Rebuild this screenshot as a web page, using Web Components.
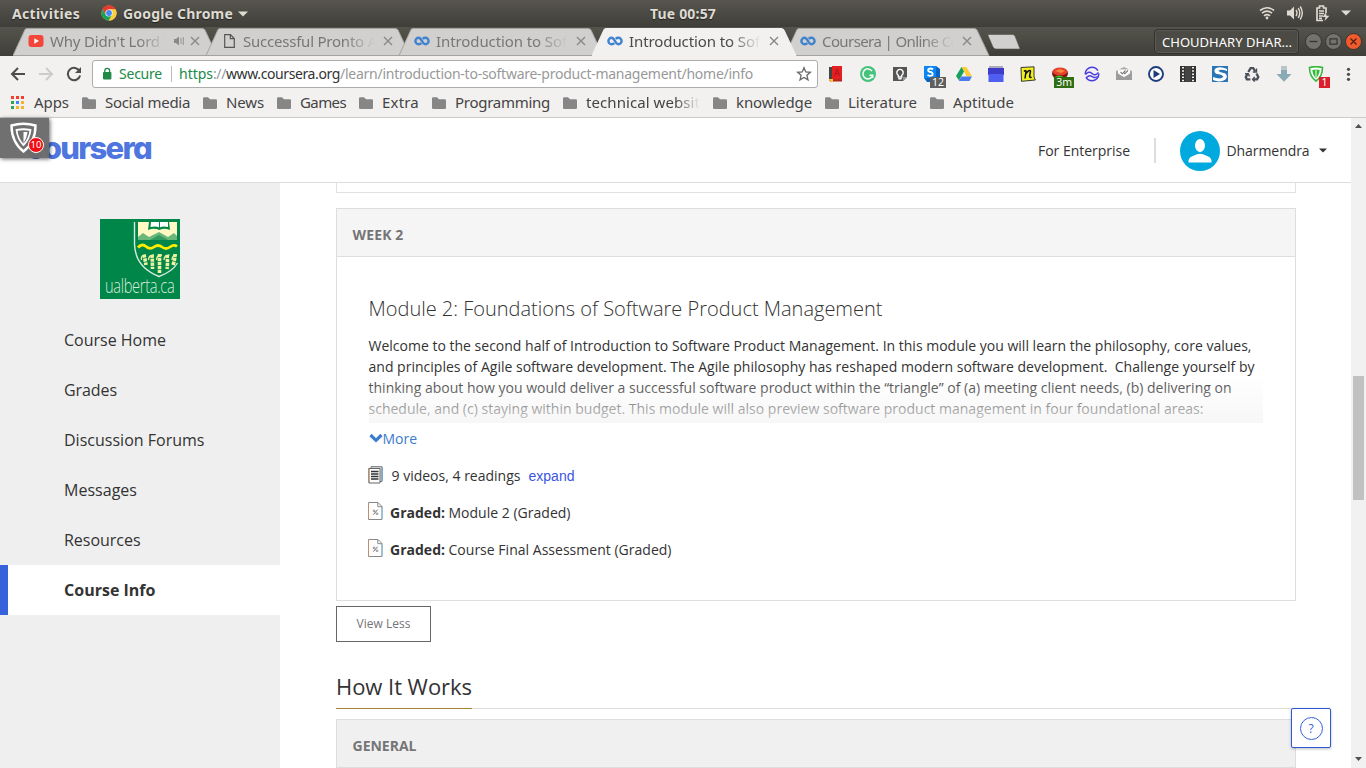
<!DOCTYPE html>
<html lang="en">
<head>
<meta charset="utf-8">
<title>Introduction to Software Product Management | Coursera</title>
<style>
html,body{margin:0;height:100%;overflow:hidden}
body{font-family:"Open Sans","Noto Sans",sans-serif;background:#fff}
</style>
</head>
<body>
<desktop-screen></desktop-screen>
<script>
const define = (name, html) => {
  const t = document.createElement('template');
  t.innerHTML = html;
  customElements.define(name, class extends HTMLElement {
    constructor() {
      super();
      this.attachShadow({mode: 'open'}).append(t.content.cloneNode(true));
    }
  });
};

define('desktop-screen', `
<style>:host{display:flex;flex-direction:column;width:1366px;height:768px;overflow:hidden}</style>
<top-panel></top-panel><tab-strip></tab-strip><browser-toolbar></browser-toolbar><bookmark-bar></bookmark-bar><page-view></page-view>`);

define('top-panel', `
<style>
:host{display:grid;grid-template-columns:1fr auto 1fr;align-items:center;box-sizing:border-box;height:27px;padding-bottom:1px;flex:none;background:linear-gradient(#57554e,#3f3e39);color:#dfdbd2;font:bold 14px "Noto Sans",sans-serif;text-shadow:0 1px 1px #222}
.l{display:flex;align-items:center;padding-left:12px}
.l svg{margin:0 6px 0 21px}
.l .dn{margin:1px 0 0 5px}
.r{display:flex;justify-content:flex-end;align-items:center;padding-right:15px;gap:11px}
</style>
<div class="l"><fit-text w="68">Activities</fit-text>
<svg width="16" height="16" viewBox="0 0 16 16"><circle cx="8" cy="8" r="7.6" fill="#fc4"/><path d="M1.4 4.2A7.6 7.6 0 0 1 14.6 4.2H8L5 9.8z" fill="#e33b2e"/><path d="M1.4 4.2A7.6 7.6 0 0 0 7.8 15.6L11.2 10 8 8 4.9 9.8z" fill="#1da15a"/><path d="M14.7 4.4H8L11.2 10 7.9 15.6A7.6 7.6 0 0 0 14.7 4.4" fill="#fdcd40"/><circle cx="8" cy="8" r="3.6" fill="#fff"/><circle cx="8" cy="8" r="2.9" fill="#4587f3"/></svg>
<fit-text w="110">Google Chrome</fit-text><svg class="dn" width="10" height="6"><path d="M0 .5H10L5 5.5z" fill="#dfdbd2"/></svg></div>
<fit-text w="66">Tue 00:57</fit-text>
<div class="r">
<svg width="16" height="16" viewBox="0 0 16 16" fill="none" stroke="#dfdbd2" stroke-width="1.6"><path d="M1 5.5Q8 0 15 5.5M3 8.2Q8 4 13 8.2M5 10.8Q8 8.4 11 10.8"/><circle cx="8" cy="13" r="1.4" fill="#dfdbd2" stroke="none"/></svg>
<svg width="18" height="16" viewBox="0 0 18 16"><path d="M1 5.5H4L8 1.5V14.5L4 10.5H1z" fill="#dfdbd2"/><path d="M10 5Q12 8 10 11M12.2 3.2Q15.4 8 12.2 12.8M14.2 1.5Q18.4 8 14.2 14.5" fill="none" stroke="#dfdbd2" stroke-width="1.4"/></svg>
<svg width="15" height="17" viewBox="0 0 15 17"><path d="M11 8V3H8.5V1H4.5V3H2V15.5H8M4 6H9M4 8.5H9M4 11H8M4 13.3H7" fill="none" stroke="#dfdbd2" stroke-width="1.7"/><path d="M11 7.5 7.5 12H10.5L9.5 16 14.5 10.8H11.5z" fill="#dfdbd2"/></svg>
<svg width="10" height="6"><path d="M0 .5H10L5 5.5z" fill="#dfdbd2"/></svg>
</div>`);

define('tab-strip', `
<style>
:host{display:flex;height:29px;flex:none;background:linear-gradient(#55544c,#3f3e39);padding-left:13px;position:relative;color:#777;font:15px "Noto Sans",sans-serif}
browser-tab+browser-tab{margin-left:-13px}
browser-tab.on{z-index:2;color:#4a4a4a}
.new{margin:7px 0 0 -4px}
.prof{margin-left:auto;align-self:center;box-sizing:border-box;width:145px;height:25px;border:1px solid #33322e;border-radius:4px;background:#4b4a44;box-shadow:inset 0 0 0 1px #5a5952;color:#fff;font:13px "Noto Sans",sans-serif;line-height:24px;padding-left:7px}
.win{display:flex;gap:1px;align-items:center;margin:0 3px 0 5px}
</style>
<browser-tab><svg slot="icon" width="16" height="16"><rect x=".5" y="2" width="15" height="12" rx="3" fill="#f4453a"/><path d="M6.3 5.3V10.7L11 8z" fill="#fff"/></svg><fit-text w="131">Why Didn't Lord Vo</fit-text><svg slot="snd" width="12" height="12"><path d="M1 4H3L6 1.5V10.5L3 8H1z" fill="#888"/><path d="M8 3V9M10.3 2V10" stroke="#999" stroke-width="1.1"/></svg></browser-tab>
<browser-tab><svg slot="icon" width="16" height="16"><path d="M3.7 1.7H9.5L13.3 5.5V14.3H3.7zM9.3 1.7V5.7H13.3" fill="none" stroke="#555" stroke-width="1.2"/></svg><fit-text w="134">Successful Pronto A</fit-text></browser-tab>
<browser-tab><loop-icon slot="icon"></loop-icon><fit-text w="131">Introduction to Sof</fit-text></browser-tab>
<browser-tab class="on" active><loop-icon slot="icon"></loop-icon><fit-text w="131">Introduction to Sof</fit-text></browser-tab>
<browser-tab><loop-icon slot="icon"></loop-icon><fit-text w="137">Coursera | Online Co</fit-text></browser-tab>
<svg class="new" width="34" height="17"><path d="M1 1.5Q1 .5 2 .5H25.5Q27 .5 28 2L33 15H9Q7 15 6 13z" fill="#d2d0cf" stroke="#55544c" stroke-width=".6"/></svg>
<div class="prof"><fit-text w="130">CHOUDHARY DHAR...</fit-text></div>
<div class="win">
<svg width="19" height="19"><circle cx="9.5" cy="9.5" r="8" fill="#74736b" stroke="#35342f"/><path d="M5.5 9.5H13.5" stroke="#35342f" stroke-width="1.3"/></svg>
<svg width="19" height="19"><circle cx="9.5" cy="9.5" r="8" fill="#74736b" stroke="#35342f"/><path d="M6 6.8H13V12.2H6z" fill="none" stroke="#35342f" stroke-width="1.2"/></svg>
<svg width="19" height="19"><circle cx="9.5" cy="9.5" r="8" fill="#f15a2c" stroke="#35342f"/><path d="M6.5 6.5 12.5 12.5M12.5 6.5 6.5 12.5" stroke="#5c2010" stroke-width="1.4"/></svg>
</div>`);

define('loop-icon', `<style>:host{display:block;width:16px;height:16px}</style>
<svg width="16" height="16" style="display:block"><path d="M7.400 10.300Q6.200 11.200 4.600 11.200A3.200 3.200 0 0 1 4.600 4.800C8 4.800 8 11.200 11.400 11.200A3.200 3.200 0 0 0 11.400 4.800Q9.800 4.800 8.700 5.700" fill="none" stroke="#3f82cf" stroke-width="2.4"/></svg>`);

define('browser-tab', `
<style>
:host{display:grid;width:206px;height:29px;flex:none;position:relative}
:host>*{grid-area:1/1}
.bg{display:block}
.shape{fill:#d2d0cf;stroke:#a5a39f}
:host([active]) .shape{fill:#f2f1f0;stroke:#f2f1f0}
.c{display:flex;align-items:center;height:28px;padding-left:15px}
.t{margin-left:6px;width:133px;overflow:hidden;white-space:nowrap;-webkit-mask:linear-gradient(90deg,#000 76%,transparent 99%);display:flex}
.x{margin-left:7px}
:host(:first-of-type) .t{width:117px}
::slotted(svg){display:block;flex:none}
::slotted([slot=snd]){width:12px;margin-left:6px;margin-right:-2px}
</style>
<svg class="bg" width="206" height="29"><path class="shape" d="M0 28.5 12 2.5Q13 1.5 14 1.5H189Q191 1.5 192 3L204 28.5z"/></svg>
<div class="c"><slot name="icon"></slot><div class="t"><slot></slot></div><slot name="snd"></slot><svg class="x" width="10" height="10"><path d="M1 1 9 9M9 1 1 9" stroke="#888" stroke-width="1.4"/></svg></div>`);

define('browser-toolbar', `
<style>
:host{display:flex;height:35px;flex:none;background:#f2f1f0;align-items:center;padding-left:10px;font:14px "Noto Sans",sans-serif}
.nav{display:flex;gap:12px;width:82px}
.omni{box-sizing:border-box;width:726px;height:28px;border:1px solid #adadad;border-radius:3px;background:#fff;display:flex;align-items:center;padding-left:9px}
.lock{margin-right:7px}
.sec{color:#218a47}
.div{width:1px;height:16px;background:#bbb;margin:0 7px 0 9px}
.g{color:#999}
.k{color:#333}
.star{margin-left:43px}
.ext{display:flex;gap:16px;margin-left:10px}
ext-icon{flex:none}
</style>
<div class="nav">
<svg width="16" height="16"><path d="M15 8H2.5M8 2 2 8 8 14" fill="none" stroke="#4d4d4d" stroke-width="2"/></svg>
<svg width="16" height="16"><path d="M1 8H13.5M8 2 14 8 8 14" fill="none" stroke="#ccc" stroke-width="2"/></svg>
<svg width="16" height="16"><path d="M13.6 5.2A6.2 6.2 0 1 0 14.1 9.5" fill="none" stroke="#4d4d4d" stroke-width="2"/><path d="M15 1V7H9z" fill="#4d4d4d"/></svg>
</div>
<div class="omni"><svg class="lock" width="10" height="13"><rect x="1" y="5" width="8.4" height="7.4" rx=".8" fill="#218a47"/><path d="M2.8 5.5V3.7A2.4 2.4 0 0 1 7.6 3.7V5.5" fill="none" stroke="#218a47" stroke-width="1.3"/></svg>
<fit-text class="sec" w="43">Secure</fit-text><i class="div"></i><fit-text class="sec" w="34">https</fit-text><fit-text class="g" w="13">://</fit-text><fit-text class="k" w="114">www.coursera.org</fit-text><fit-text class="g" w="413">/learn/introduction-to-software-product-management/home/info</fit-text>
<svg class="star" width="16" height="16"><path d="M8 1.7 9.8 5.9 14.4 6.3 10.9 9.3 12 13.8 8 11.4 4 13.8 5.1 9.3 1.6 6.3 6.2 5.9z" fill="none" stroke="#666" stroke-width="1.3"/></svg></div>
<div class="ext">
<ext-icon><svg width="16" height="16"><path d="M1 1H4V13H1z" fill="#444"/><path d="M4 0H14V14H4z" fill="#e31f22"/><path d="M6.500 10 9 3 11.500 10M7.300 7.500H10.700" fill="none" stroke="#b5151a" stroke-width="1"/><path d="M1 13.500H14V15.500H2z" fill="#b3261f"/><path d="M1 13H5V16H3z" fill="#ffc42c"/></svg></ext-icon>
<ext-icon><svg width="16" height="16"><circle cx="8" cy="8" r="8" fill="#45c37c"/><path d="M12 5A5 5 0 1 0 12.7 9.3H9.5M12.7 9V12" fill="none" stroke="#fff" stroke-width="1.5"/></svg></ext-icon>
<ext-icon><svg width="16" height="16"><path d="M1 1H15V11L11 15H1z" fill="#555"/><path d="M11 15V11H15z" fill="#999"/><path d="M6.3 11V9.3A3.2 3.2 0 1 1 9.7 9.3V11zM6.3 12.7H9.7" fill="none" stroke="#fff" stroke-width="1.4"/></svg></ext-icon>
<ext-icon><svg width="16" height="16"><path d="M0 0H12L16 3V16H3L0 12z" fill="#0563c9"/><path d="M0 0H12V12H0z" fill="#0a86f5"/><path d="M9 3.4Q7 2 5 2.8Q3 4.2 5.5 5.8Q9.5 6.5 8.5 9Q6.5 10.7 3.5 9" fill="none" stroke="#fff" stroke-width="1.9"/></svg><span slot="badge">12</span></ext-icon>
<ext-icon><svg width="16" height="16"><path d="M5.5 1H10.5L16 10.4H10.8z" fill="#fc3"/><path d="M5.5 1 8 5.6 3 14.5 0 10z" fill="#15a05e"/><path d="M5.4 10.4H16L13.4 15H2.8z" fill="#4a7af0"/></svg></ext-icon>
<ext-icon><svg width="16" height="16"><path d="M1 0H15V4H1z" fill="#aab"/><path d="M0 2H16V9H0z" fill="#3c3cc9"/><path d="M.5 8H15.5V16H.5z" fill="#4e5ef0"/></svg></ext-icon>
<ext-icon><svg width="16" height="16"><path d="M1 1.5 14 .8V11L15.300 14 1.500 15.300z" fill="#f2ef22" stroke="#222" stroke-width=".9"/><path d="M4 5.500Q6 3.600 6 5.500L5 12.500M6 7.500Q9.500 3 10.500 5L9.600 10Q9.500 12.200 11.500 11" fill="none" stroke="#111" stroke-width="1.5"/></svg></ext-icon>
<ext-icon style="--b:#2f6e12;--r:-6px"><svg width="16" height="16"><ellipse cx="8" cy="7.5" rx="8" ry="5.5" fill="#7d160b"/><ellipse cx="8" cy="5.5" rx="7.5" ry="4" fill="#e6412c"/><path d="M3 5 8 3 13 5 9 7z" fill="#f5863d"/><path d="M1 12Q7 7 13 12z" fill="#37c332"/></svg><span slot="badge">3m</span></ext-icon>
<ext-icon><svg width="16" height="16"><circle cx="8" cy="8" r="6.8" fill="none" stroke="#4b3ce0" stroke-width="1.5" stroke-dasharray="18 3"/><path d="M1.500 8.500Q5 4.500 8 7.500T14.500 6.500M2.500 11.500Q5.500 8.500 8 10.500T13.500 10.500" fill="none" stroke="#4b3ce0" stroke-width="1.4"/></svg></ext-icon>
<ext-icon><svg width="16" height="16"><path d="M0 5 8 1 16 5V14H0z" fill="#aaa"/><path d="M2 3.5H14V8.5L8 11 2 8.5z" fill="#fff"/><path d="M0 6 8 11.5 16 6V14H0z" fill="#9c9c9c"/><path d="M4.5 6 6.3 7.8 9.5 4.5M8 7 8.8 7.8 12 4.5" fill="none" stroke="#777" stroke-width="1.1"/></svg></ext-icon>
<ext-icon><svg width="16" height="16"><circle cx="8" cy="8" r="7" fill="#fff" stroke="#1b3d7b" stroke-width="1.9"/><path d="M5.5 4V12L12 8z" fill="#1b3d7b"/></svg></ext-icon>
<ext-icon><svg width="16" height="16"><path d="M0 0H16V16H0z" fill="#333"/><path d="M3 1V16M13 1V16" stroke="#f2f1f0" stroke-width="2" stroke-dasharray="1.5 1.7"/><path d="M5 0H11V16H5z" fill="#444"/></svg></ext-icon>
<ext-icon><svg width="16" height="16"><path d="M0 0H16V16H0z" fill="#2a75b5"/><path d="M15 3Q8-.3 3.5 2.5Q1 5 4 7.7Q10 8.5 11.5 10.5Q9 14 1 11V14Q8 17 13.5 13.5Q16.5 10 13 7.2Q8 6.5 6.3 4.8Q9 2.5 15 5z" fill="#fff"/></svg></ext-icon>
<ext-icon><svg width="16" height="16" fill="none" stroke="#4a4f5a" stroke-width="2.3"><path d="M4.3 6 6.6 2.2H9.2L11.3 5.3M12.5 7.5 14.3 11 13 13.4H9.2M6.4 13.4H2.9L1.8 11 3.8 7.7"/><path d="M12.5 2.5V6H8.8M10.7 11 8.6 13.4 10.7 15.6M1 7.8H4.3L5.5 10.4" stroke-width="1.4"/></svg></ext-icon>
<ext-icon><svg width="16" height="16"><path d="M5 0H11V8H15.5L8 15.7.5 8H5z" fill="#8aabb5"/><path d="M5 0H11V4H5z" fill="#b9c5c9"/></svg></ext-icon>
<ext-icon style="--b:#d9202b;--r:-6px"><svg width="16" height="16"><path d="M1.5 1.5Q8-.3 14.5 1.5Q14.5 10.5 8 15Q1.5 10.5 1.5 1.5z" fill="#fff" stroke="#35b93b" stroke-width="1.6"/><path d="M4.3 4Q8 3 11.7 4Q11.3 9 8 12Q4.7 9 4.3 4z" fill="#35b93b"/><path d="M8 4V11" stroke="#fff"/></svg><span slot="badge">1</span></ext-icon>
<svg width="16" height="16"><g fill="#4d4d4d"><circle cx="8.500" cy="3.3" r="1.6"/><circle cx="8.500" cy="8.3" r="1.6"/><circle cx="8.500" cy="13.3" r="1.6"/></g></svg>
</div>`);

define('ext-icon', `
<style>:host{display:block;width:16px;height:16px;position:relative}
::slotted(svg){display:block}
.b{position:absolute;right:var(--r,-6px);top:11px;background:var(--b,#5f5f5f);color:#fff;font:10.5px/11px "Noto Sans",sans-serif}
::slotted(span){display:block;padding:0 2px;min-width:7px;text-align:center}</style>
<slot></slot><div class="b"><slot name="badge"></slot></div>`);

define('bookmark-bar', `
<style>:host{display:flex;box-sizing:border-box;height:27px;flex:none;background:#f2f1f0;border-bottom:1px solid #ccc;padding:0 0 3px 11px;align-items:center;gap:13px;color:#444;font:15px "Noto Sans",sans-serif}
.apps{display:flex;align-items:center;gap:10px}
.fade{-webkit-mask:linear-gradient(90deg,#000 78%,transparent);display:block}
.apps fit-text{margin-top:-1px}</style>
<div class="apps"><svg width="13" height="13"><g fill="#f2402c"><path d="M0 0H3V3H0zM5 0H8V3H5zM10 0H13V3H10z"/></g><path d="M0 5H3V8H0zM0 10H3V13H0z" fill="#31a352"/><path d="M5 5H8V8H5z" fill="#4285f4"/><path d="M10 5H13V8H10zM5 10H8V13H5zM10 10H13V13H10z" fill="#f8b32d"/></svg><fit-text w="35">Apps</fit-text></div>
<book-mark><fit-text w="85">Social media</fit-text></book-mark>
<book-mark><fit-text w="38">News</fit-text></book-mark>
<book-mark><fit-text w="46">Games</fit-text></book-mark>
<book-mark><fit-text w="37">Extra</fit-text></book-mark>
<book-mark><fit-text w="95">Programming</fit-text></book-mark>
<book-mark><fit-text class="fade" w="114">technical websit</fit-text></book-mark>
<book-mark><fit-text w="76">knowledge</fit-text></book-mark>
<book-mark><fit-text w="69">Literature</fit-text></book-mark>
<book-mark><fit-text w="61">Aptitude</fit-text></book-mark>`);

define('book-mark', `<style>:host{display:flex;align-items:center;gap:9px}::slotted(*){margin-top:-1px}</style>
<svg width="14" height="12"><path d="M0 1.5Q0 .3 1.2.3H5L7 2.3H12.8Q14 2.3 14 3.5V10.8Q14 12 12.8 12H1.2Q0 12 0 10.8z" fill="#868686"/></svg><slot></slot>`);

define('page-view', `
<style>:host{display:grid;grid-template-columns:1351px 15px;height:650px;position:relative;font:14px "Open Sans",sans-serif;color:#333}
.p{display:grid;grid-template-rows:65px 585px;overflow:hidden}
.b{display:grid;grid-template-columns:280px 1fr;overflow:hidden}
.help{position:absolute;left:1291px;top:590px;width:38px;height:38px;border:1px solid #2a5bd0;border-radius:2px;background:#fff;display:grid;place-items:center;box-shadow:0 1px 3px #0004}
.help span{width:21px;height:21px;border:1px solid #3762dc;border-radius:50%;color:#3762dc;font-size:12px;line-height:21px;text-align:center}
.zm{position:absolute;left:0;top:0;width:49px;height:40px;background:#6b6b6bf7;box-shadow:1px 1px 4px #0009}
.zm svg{display:block}
.zm b{position:absolute;left:28px;top:19px;width:14px;height:14px;border:1.5px solid #fff;border-radius:50%;background:#f10e12;color:#fff;font:9.5px/14px "Noto Sans",sans-serif;text-align:center}</style>
<div class="p"><site-header></site-header><div class="b"><course-nav></course-nav><course-main></course-main></div></div>
<scroll-bar></scroll-bar>
<div class="help"><span>?</span></div>
<div class="zm"><svg width="49" height="40"><path d="M11.5 7.5Q23.500 4 35.500 7.500Q35.500 24 23.500 33.500Q11.500 24 11.500 7.500z" fill="none" stroke="#fff" stroke-width="2.4"/><path d="M16.500 12Q23.500 10.500 30.500 12Q29.500 21 23.500 27Q17.500 21 16.500 12z" fill="none" stroke="#fff" stroke-width="1.8"/><path d="M23.500 14H27.500Q27 20 23.500 25z" fill="#fff"/></svg><b>10</b></div>`);

define('scroll-bar', `<style>:host{display:flex;flex-direction:column;background:#f1f1f1;align-items:center}
i{width:11px;height:124px;background:#c1c1c1;margin:241px 0 auto}
svg{display:block;margin:5px 0 6px}</style>
<svg width="7" height="6"><path d="M0 5 3.500 1 7 5z" fill="#505050"/></svg><i></i><svg width="7" height="6"><path d="M0 1 3.500 5 7 1z" fill="#505050"/></svg>`);

define('site-header', `<style>:host{display:flex;align-items:center;box-sizing:border-box;border-bottom:1px solid #ddd;background:#fff;padding:0 24px 0 26px}
.logo{color:#4f75df;font:800 31px/40px Inter,sans-serif;font-feature-settings:"cv11","ss01";margin-top:-5px}
.e{margin-left:auto}
i{width:2px;height:25px;background:#ddd;margin:0 24px}
.av{margin-top:1px}
.n{margin:0 9.500px 0 6.500px}</style>
<fit-text class="logo" w="125">coursera</fit-text><fit-text class="e" w="92">For Enterprise</fit-text><i></i>
<svg class="av" width="40" height="40"><circle cx="20" cy="20" r="20" fill="#00a9de"/><ellipse cx="20" cy="14.500" rx="5" ry="6.500" fill="#fff"/><path d="M8.500 31.500V29.500Q9 26 14 24.500Q17 22.800 20 22.800T26 24.500Q31 26 31.500 29.500V31.500z" fill="#fff"/></svg>
<fit-text class="n" w="83">Dharmendra</fit-text><svg width="8" height="5"><path d="M0 .5H8L4 4.500z" fill="#333"/></svg>`);

define('course-nav', `<style>:host{display:flex;flex-direction:column;background:#efefef;font-size:16px;color:#333}
.logo{margin:36px 0 16px 100px;display:block;overflow:visible}
div{height:50px;padding-left:64px;display:flex;align-items:center}
.on{background:#fff;font-weight:700;border-left:8px solid #3762dc;padding-left:56px;color:#333}</style>
<svg class="logo" width="80" height="80"><path d="M0 0H80V80H0z" fill="#008648"/><path d="M34.500 3V25Q35 48 59 57.500Q72 53 77.500 44" fill="none" stroke="#d8eadb" stroke-width="1.400"/><path d="M38 3H77V21H38z" fill="#fffac3"/><path d="M49 3H69L70 11Q64 8.500 59.500 11Q54 8.500 48 11z" fill="#008648"/><path d="M51 3H68L68 8Q63 7 59.500 8.500Q56 7 50.500 8z" fill="#fff"/><path d="M59.500 3V10" stroke="#008648"/><path d="M38 18 43 14 49 18 59 13 68 18 74 14 77 17V21H38z" fill="#69b77a"/><path d="M50 21 59 16 68 21z" fill="#2f9b5e"/><path d="M38 21H77V25H38z" fill="#008648"/><path d="M38 28.500Q42 24 46 27.500T54 28T62 28T70 28T77 27.500" fill="none" stroke="#ffed00" stroke-width="2.800"/><g fill="none" stroke="#eff0a0" stroke-width="3.600" stroke-dasharray="3.200 .800"><path d="M44 36Q45 40 46 46M52 36Q52.500 42 52.500 50M59.500 35V54M67 36Q68 43 67 50M75 35Q75 40 73 46"/></g><g fill="none" stroke="#eff0a0" stroke-width="1.300"><path d="M41.500 41Q40.500 36 46 36M48.500 41Q48.500 36 54 36M56.500 41Q56.500 36 62 36M64 41Q64 36 69.500 36M72 41Q72 36 77 36"/></g><text transform="translate(5 73.500) scale(.75 1)" textLength="93" font-family="Open Sans" font-weight="300" font-size="19.500" fill="#d8eadb">ualberta.ca</text></svg>
<div><fit-text w="102">Course Home</fit-text></div><div><fit-text w="53">Grades</fit-text></div><div><fit-text w="140.500">Discussion Forums</fit-text></div><div><fit-text w="73">Messages</fit-text></div><div><fit-text w="76.500">Resources</fit-text></div><div class="on"><fit-text w="91.500">Course Info</fit-text></div>`);

define('course-main', `<style>:host{display:flex;flex-direction:column;padding:0 55px 0 56px;align-items:flex-start}
.prev{box-sizing:border-box;width:960px;height:10px;border:1px solid #e1e1e1;border-top:0;margin-bottom:15px;flex:none}
.pad{padding:37px 32px 0 31.500px}
h3{font:300 20px/30px "Open Sans",sans-serif;margin:0 0 11px}
.desc{position:relative;height:88px;width:894.500px}
.desc fit-text{display:block;line-height:21px}
.fade{position:absolute;inset:40px 0 0 .500px;background:linear-gradient(#f5f5f500,#f5f5f5d0)}
.more{color:#3a7ccd;display:flex;align-items:center;height:30px;margin-bottom:4px}
.row{display:flex;align-items:center;height:37px}
.row svg{margin:-1px 8.500px 0 -.500px}
.row b{font-weight:700;margin-right:3.500px}
.exp{font-family:"Liberation Sans",sans-serif;color:#3b55df;margin-left:8px}
.btn{box-sizing:border-box;width:95px;height:36px;flex:none;border:1px solid #666;margin:5px 0 27px;padding-bottom:2px;font-size:12px;color:#757575;display:flex;align-items:center;justify-content:center}
.how{width:960px;height:40px;flex:none;box-sizing:border-box;border-bottom:1px solid #ddd;margin-bottom:10px;font-size:22px;line-height:34px;display:flex}
.how fit-text{height:40px;border-bottom:1px solid #a78239;box-sizing:border-box}
</style>
<div class="prev"></div>
<week-card style="height:393px"><fit-text slot="head" w="51">WEEK 2</fit-text>
<div class="pad"><h3><fit-text w="514">Module 2: Foundations of Software Product Management</fit-text></h3>
<div class="desc"><fit-text w="883">Welcome to the second half of Introduction to Software Product Management. In this module you will learn the philosophy, core values,</fit-text><fit-text w="886">and principles of Agile software development. The Agile philosophy has reshaped modern software development.&nbsp; Challenge yourself by</fit-text><fit-text w="863">thinking about how you would deliver a successful software product within the “triangle” of (a) meeting client needs, (b) delivering on</fit-text><fit-text w="835">schedule, and (c) staying within budget. This module will also preview software product management in four foundational areas:</fit-text><div class="fade"></div></div>
<div class="more"><svg width="14" height="10"><path d="M1.500 2 7 7.300 12.500 2" fill="none" stroke="#3a7ccd" stroke-width="3.200"/></svg><fit-text w="34.500">More</fit-text></div>
<div class="row"><svg width="15" height="18"><path d="M3 .700H14V15.500H3z" fill="#ddd" stroke="#777"/><path d="M14.300 1V15" stroke="#6aa5d8" stroke-width="1"/><path d="M1 2.500H12V17H1z" fill="#fff" stroke="#666"/><path d="M.600 2V17" stroke="#b98a68" stroke-width="1"/><path d="M3 5.500H10.500M3 8H10.500M3 10.500H10.500M3 13H10.500" stroke="#333" stroke-width="1.300"/></svg><fit-text w="129">9 videos, 4 readings</fit-text><fit-text class="exp" w="46">expand</fit-text></div>
<div class="row"><doc-icon></doc-icon><b><fit-text w="55">Graded:</fit-text></b><fit-text w="122">Module 2 (Graded)</fit-text></div>
<div class="row"><doc-icon></doc-icon><b><fit-text w="55">Graded:</fit-text></b><fit-text w="223">Course Final Assessment (Graded)</fit-text></div>
</div></week-card>
<div class="btn"><fit-text w="54">View Less</fit-text></div>
<div class="how"><fit-text w="136">How It Works</fit-text></div>
<week-card style="height:80px;--h:#f0f0f0"><fit-text slot="head" w="64">GENERAL</fit-text></week-card>`);

define('doc-icon', `<style>:host{display:block;margin-right:7px;margin-left:-.500px;height:18px;margin-top:-3px}</style>
<svg width="15" height="18"><path d="M.500.500H10L14 4.500V17.500H.500zM9.800.800V4.700H14" fill="#fff" stroke="#888"/><path d="M.500 1V17" stroke="#c58a66"/><path d="M14 5V17" stroke="#7cbde0"/><path d="M9.600 7.700 5.300 12.600" stroke="#666"/><circle cx="6" cy="8.800" r=".9" fill="none" stroke="#777" stroke-width=".8"/><circle cx="9" cy="11.700" r=".9" fill="none" stroke="#777" stroke-width=".8"/></svg>`);

define('week-card', `<style>:host{display:block;box-sizing:border-box;width:960px;flex:none;border:1px solid #ddd;background:#fff}
header{box-sizing:content-box;height:43px;background:var(--h,#f5f5f5);border-bottom:1px solid #ddd;padding:4px 0 0 15.500px;display:flex;align-items:center;color:#757575;font-weight:700}</style>
<header><slot name="head"></slot></header><slot></slot>`);

/* A single line of text whose tracking is tuned so that it fills the width in its "w" attribute. */
customElements.define('fit-text', class extends HTMLElement {
  constructor() {
    super();
    this.attachShadow({mode: 'open'}).innerHTML = '<style>:host{display:inline-block;white-space:pre;flex:none}span{display:inline-block}</style><span><slot></slot></span>';
  }
  connectedCallback() {
    const span = this.shadowRoot.querySelector('span');
    const w = +this.getAttribute('w');
    const n = this.textContent.length;
    span.style.letterSpacing = (w - span.getBoundingClientRect().width) / n + 'px';
    this.style.width = w + 'px';
  }
});
</script>
</body>
</html>
